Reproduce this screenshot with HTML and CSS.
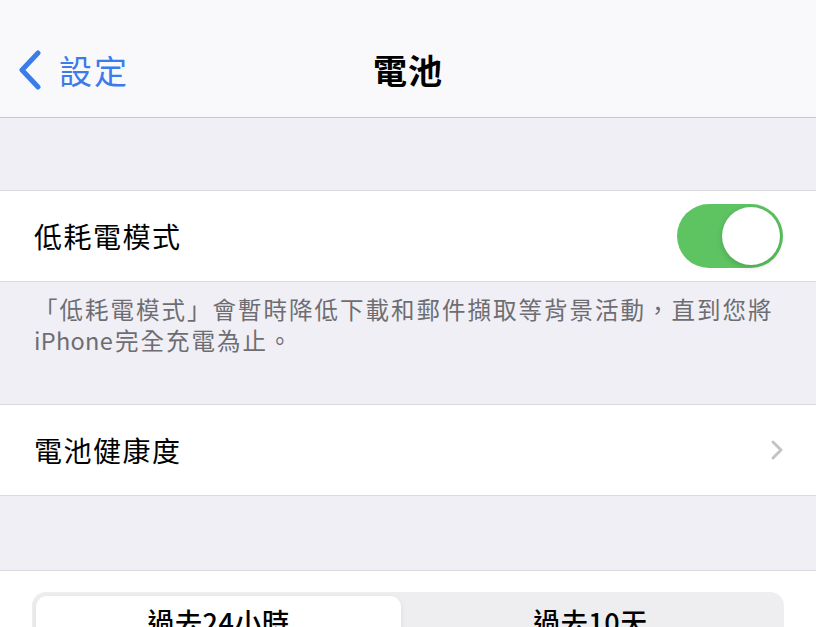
FILE: index.html
```html
<!DOCTYPE html>
<html lang="zh-Hant">
<head>
<meta charset="utf-8">
<link rel="stylesheet" href="styles.css">
</head>
<body>
<div class="screen">
  <header class="nav">
    <div class="back">
      <svg class="back-chev" width="26" height="40" viewBox="0 0 26 40"><path d="M21 3 L5 20 L21 37" fill="none" stroke="#3a7ce9" stroke-width="5" stroke-linecap="round" stroke-linejoin="round"/></svg>
      <span class="back-label">設定</span>
    </div>
    <h1 class="title">電池</h1>
  </header>
  <div class="gap gap-top"></div>
  <div class="row">
    <span class="row-label">低耗電模式</span>
    <div class="toggle"><div class="knob"></div></div>
  </div>
  <p class="footer">「低耗電模式」會暫時降低下載和郵件擷取等背景活動，直到您將<span class="latin">iPhone</span>完全充電為止。</p>
  <div class="row">
    <span class="row-label">電池健康度</span>
    <svg class="chev" width="14" height="22" viewBox="0 0 14 22"><path d="M3 3 L11 11 L3 19" fill="none" stroke="#c4c4c7" stroke-width="3" stroke-linecap="round" stroke-linejoin="round"/></svg>
  </div>
  <div class="gap gap-mid"></div>
  <div class="panel">
    <div class="segmented">
      <div class="seg seg-active">過去24小時</div>
      <div class="seg">過去10天</div>
    </div>
  </div>
</div>
</body>
</html>
```
FILE: styles.css
```css
* { box-sizing: border-box; margin: 0; padding: 0; }
html, body { width: 816px; height: 627px; overflow: hidden; }
body {
  background: #f0eff5;
  font-family: "Noto Sans CJK TC", "Noto Sans", sans-serif;
  color: #000;
}
.screen { display: flex; flex-direction: column; }
.nav {
  height: 118px;
  background: #f9f9fb;
  border-bottom: 1px solid #c8c7cc;
  position: relative;
  display: flex;
  align-items: center;
  justify-content: center;
  padding-top: 22px;
}
.back {
  position: absolute;
  left: 17px;
  top: 50px;
  display: flex;
  align-items: center;
  gap: 16px;
}
.back-label {
  color: #3a7ce9;
  font-size: 33px;
  line-height: 40px;
  letter-spacing: 2px;
}
.title {
  font-size: 34px;
  font-weight: 700;
  line-height: 40px;
  letter-spacing: 1px;
}
.gap-top { height: 72px; }
.gap-mid { height: 74px; }
.row {
  height: 92px;
  background: #fff;
  border-top: 1px solid #d9d9de;
  border-bottom: 1px solid #d9d9de;
  display: flex;
  align-items: center;
  justify-content: space-between;
  padding: 0 34px 0 34px;
}
.row-label {
  font-size: 28px;
  letter-spacing: 1.5px;
}
.toggle {
  width: 106px;
  height: 64px;
  border-radius: 32px;
  background: #5ec462;
  padding: 3px;
  display: flex;
  justify-content: flex-end;
  margin-right: -1px;
}
.knob {
  width: 58px;
  height: 58px;
  border-radius: 50%;
  background: #fff;
  box-shadow: 0 2px 6px rgba(0,0,0,0.18);
}
.chev { margin-right: -2px; }
.footer {
  height: 122px;
  padding: 12px 30px 0 34px;
  font-size: 23.5px;
  line-height: 31px;
  color: #6d6d72;
  letter-spacing: 2px;
}
.latin { letter-spacing: 0.3px; margin-right: 2px; }
.panel {
  background: #fff;
  border-top: 1px solid #d9d9de;
  padding: 21px 32px 0 32px;
  height: 200px;
}
.segmented {
  background: #eeeef0;
  border-radius: 14px;
  padding: 4px;
  display: flex;
  height: 64px;
}
.seg {
  flex: 1;
  display: flex;
  justify-content: center;
  align-items: flex-start;
  font-size: 27px;
  font-weight: 500;
  line-height: 40px;
  padding-top: 6px;
  letter-spacing: 0.5px;
}
.seg-active {
  flex: 0 0 365px;
  background: #fff;
  border-radius: 11px;
  box-shadow: 0 2px 6px rgba(0,0,0,0.08);
}
```
